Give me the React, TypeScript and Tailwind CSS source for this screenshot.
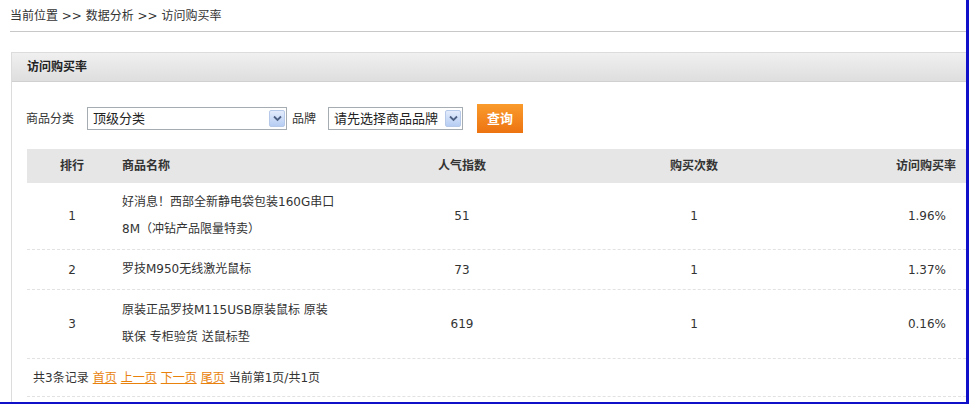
import React from "react";

const font = "font-['DejaVu_Sans','Noto_Sans_CJK_SC',sans-serif]";

type Row = { rank: number; name: string[]; hot: number; buys: number; rate: string; pad: string };

const rows: Row[] = [
  { rank: 1, name: ["好消息！西部全新静电袋包装160G串口", "8M（冲钻产品限量特卖）"], hot: 51, buys: 1, rate: "1.96%", pad: "py-[6px]" },
  { rank: 2, name: ["罗技M950无线激光鼠标"], hot: 73, buys: 1, rate: "1.37%", pad: "py-[6px]" },
  { rank: 3, name: ["原装正品罗技M115USB原装鼠标 原装", "联保 专柜验货 送鼠标垫"], hot: 619, buys: 1, rate: "0.16%", pad: "py-[7px]" },
];

function SelectBox({ width, label }: { width: string; label: string }) {
  return (
    <div className={`${width} h-[23px] border border-[#a5acb2] bg-white flex items-center justify-between pl-[5px] pr-[1px]`}>
      <span className="text-[13px] text-[#222] leading-none">{label}</span>
      <span className="w-[16px] h-[17px] rounded-[2px] border border-[#b7c9e8] bg-gradient-to-b from-[#e3ecfb] to-[#b6cdf3] flex items-center justify-center">
        <svg width="9" height="7" viewBox="0 0 9 7">
          <path d="M1 1.5 L4.5 5 L8 1.5" fill="none" stroke="#4d6185" strokeWidth="1.8" />
        </svg>
      </span>
    </div>
  );
}

export default function App() {
  return (
    <div className={`${font} w-[969px] h-[404px] overflow-hidden bg-white text-[12px] text-[#333] border-r-[3px] border-b-[2px] border-[#1010c8]`}>
      {/* breadcrumb */}
      <div className="h-[32px] ml-[10px] border-b border-[#c8c8c8] flex items-center pt-[1px]">
        <span className="text-[12px] text-[#333]">当前位置 &gt;&gt; 数据分析 &gt;&gt; 访问购买率</span>
      </div>

      {/* panel */}
      <div className="mt-[20px] ml-[11px] border-l border-t border-[#dcdcdc] h-[400px]">
        <div className="h-[29px] bg-gradient-to-b from-[#f0f0f0] to-[#dedede] border-b border-[#d0d0d0] flex items-center pl-[15px]">
          <span className="font-bold text-[12px] text-[#222]">访问购买率</span>
        </div>

        {/* filters */}
        <div className="flex items-center h-[41px] mt-[16px] pl-[14px]">
          <span className="mr-[13px]">商品分类</span>
          <SelectBox width="w-[200px]" label="顶级分类" />
          <span className="ml-[5px] mr-[12px]">品牌</span>
          <SelectBox width="w-[135px]" label="请先选择商品品牌" />
          <button className="ml-[14px] w-[46px] h-[29px] bg-gradient-to-b from-[#fa9b2c] to-[#ec7310] text-white font-bold text-[13px] flex items-center justify-center">
            查询
          </button>
        </div>

        {/* table */}
        <div className="ml-[15px] mt-[10px]">
          <div className="h-[34px] bg-[#e6e6e6] flex items-center font-bold text-[#333]">
            <div className="w-[90px] text-center">排行</div>
            <div className="w-[250px] pl-[5px]">商品名称</div>
            <div className="w-[190px] text-center">人气指数</div>
            <div className="w-[274px] text-center">购买次数</div>
            <div className="flex-1 text-right pr-[10px]">访问购买率</div>
          </div>
          {rows.map((r) => (
            <div key={r.rank} className={`flex items-center border-b border-dashed border-[#e2e2e2] ${r.pad}`}>
              <div className="w-[90px] text-center">{r.rank}</div>
              <div className="w-[250px] pl-[5px] leading-[27px]">
                {r.name.map((l, i) => (
                  <div key={i}>{l}</div>
                ))}
              </div>
              <div className="w-[190px] text-center">{r.hot}</div>
              <div className="w-[274px] text-center">{r.buys}</div>
              <div className="flex-1 text-right pr-[20px]">{r.rate}</div>
            </div>
          ))}
          <div className="h-[38px] flex items-center pl-[6px] border-b border-dashed border-[#e2e2e2] gap-[4px]">
            <span>共3条记录</span>
            <a className="text-[#e8820c] underline">首页</a>
            <a className="text-[#e8820c] underline">上一页</a>
            <a className="text-[#e8820c] underline">下一页</a>
            <a className="text-[#e8820c] underline">尾页</a>
            <span>当前第1页/共1页</span>
          </div>
        </div>
      </div>
    </div>
  );
}
